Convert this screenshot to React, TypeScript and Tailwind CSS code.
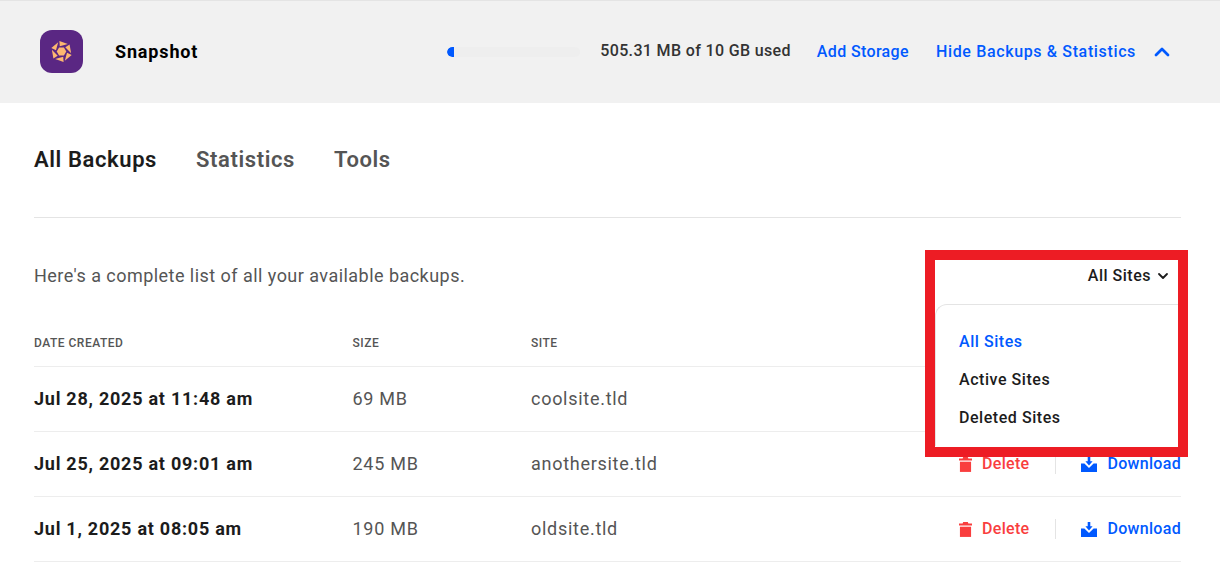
import { ChevronDown, ChevronUp } from "lucide-react"

const rows = [
  { date: "Jul 28, 2025 at 11:48 am", size: "69 MB", site: "coolsite.tld" },
  { date: "Jul 25, 2025 at 09:01 am", size: "245 MB", site: "anothersite.tld" },
  { date: "Jul 1, 2025 at 08:05 am", size: "190 MB", site: "oldsite.tld" },
]

function LogoMark() {
  return (
    <svg viewBox="0 0 24 24" className="h-[23px] w-[23px]" fill="#fdb870">
      <polygon points="7,12 9.5,7.7 14.5,7.7 17,12 14.5,16.3 9.5,16.3" />
      {[0, 60, 120, 180, 240, 300].map((deg) => (
        <path key={deg} d="M9.8 1 18.6 4.2 10.2 6.4Z" transform={`rotate(${deg} 12 12)`} />
      ))}
    </svg>
  )
}

function TrashIcon() {
  return (
    <svg viewBox="0 0 14 16" className="h-[15px] w-[13px]" fill="#f93e3e">
      <path d="M4.5 0h5l.6 1.6H14v2H0v-2h3.9z" />
      <path d="M1 5h12v11H1z" />
    </svg>
  )
}

function DownloadIcon() {
  return (
    <svg viewBox="0 0 16 15" className="h-[15px] w-[16px]" fill="#0059ff">
      <path d="M6.7 0h2.6v4.2h2.3L8 8.4 4.4 4.2h2.3z" />
      <path d="M0 6.5h3.4L8 11l4.6-4.5H16V15H0z" />
    </svg>
  )
}

export default function App() {
  return (
    <div className="relative h-[570px] w-[1220px] overflow-hidden bg-white font-['Roboto',sans-serif]">
      <header className="flex h-[103px] items-center border-t border-[#e4e4e4] bg-[#f1f1f1] pl-10 pr-[46px]">
        <div className="mb-px flex h-[43px] w-[43px] items-center justify-center rounded-xl bg-[#5a2783]">
          <LogoMark />
        </div>
        <span className="ml-8 text-lg font-bold tracking-[0.85px] text-black">Snapshot</span>
        <div className="ml-auto flex items-center">
          <div className="h-[10px] w-[133px] overflow-hidden rounded-full bg-[#eeeeee]">
            <div className="h-full w-[7px] rounded-l-full bg-[#0059ff]" />
          </div>
          <span className="mb-[2px] ml-5 text-base font-medium tracking-[0.35px] text-[#333333]">505.31 MB of 10 GB used</span>
          <a className="ml-[26px] text-base font-medium tracking-[0.36px] text-[#0059ff]">Add Storage</a>
          <a className="ml-[27px] text-base font-medium tracking-[0.64px] text-[#0059ff]">Hide Backups &amp; Statistics</a>
          <ChevronUp className="mb-px ml-[14px] h-6 w-6 text-[#0059ff]" strokeWidth={2.75} />
        </div>
      </header>

      <main className="pl-[34px] pr-[39px]">
        <nav className="flex h-[115px] items-center gap-[39px] border-b border-[#e4e4e4] pb-[2px] text-[22px] font-semibold tracking-[0.6px] text-[#555555]">
          <span className="text-[#1c1c1c]">All Backups</span>
          <span>Statistics</span>
          <span>Tools</span>
        </nav>

        <div className="relative flex h-[116px] items-start justify-between pt-[46px]">
          <p className="text-lg leading-6 tracking-[0.46px] text-[#555555]">
            Here's a complete list of all your available backups.
          </p>
          <button className="mr-[10px] flex items-center gap-1 text-base font-medium leading-6 tracking-[0.5px] text-[#1c1c1c]">
            All Sites
            <ChevronDown className="h-4 w-4" strokeWidth={2.75} />
          </button>
          <div className="absolute right-0 top-[86px] z-10 flex h-[142px] w-[246px] flex-col gap-[14px] rounded-tl-xl border-l border-t border-[#e4e4e4] bg-white pl-[23px] pt-[25px] text-base font-medium leading-6 tracking-[0.55px] text-[#1c1c1c]">
            <span className="text-[#0059ff]">All Sites</span>
            <span>Active Sites</span>
            <span>Deleted Sites</span>
          </div>
        </div>

        <div className="grid h-[33px] grid-cols-[318.5px_178.5px_1fr] items-start border-b border-[#ededed] text-xs font-medium uppercase leading-[18px] tracking-[0.5px] text-[#555555]">
          <span>Date Created</span>
          <span>Size</span>
          <span>Site</span>
        </div>
        {rows.map((row) => (
          <div
            key={row.date}
            className="grid h-[65px] grid-cols-[318.5px_178.5px_1fr_auto] items-center border-b border-[#ededed] text-lg tracking-[0.72px] text-[#555555]"
          >
            <span className="font-bold tracking-[0.75px] text-[#1c1c1c]">{row.date}</span>
            <span>{row.size}</span>
            <span>{row.site}</span>
            <div className="flex items-center text-base font-medium tracking-[0.3px]">
              <a className="flex items-center gap-[10px] text-[#f93e3e]">
                <TrashIcon />
                Delete
              </a>
              <span className="ml-[26px] mr-[25px] h-5 w-px bg-[#e4e4e4]" />
              <a className="flex items-center gap-[10px] text-[#0059ff]">
                <DownloadIcon />
                Download
              </a>
            </div>
          </div>
        ))}
      </main>

      <div className="absolute left-[925px] top-[250px] z-20 h-[207px] w-[263px] border-[10px] border-[#ed1c24]" />
    </div>
  )
}
